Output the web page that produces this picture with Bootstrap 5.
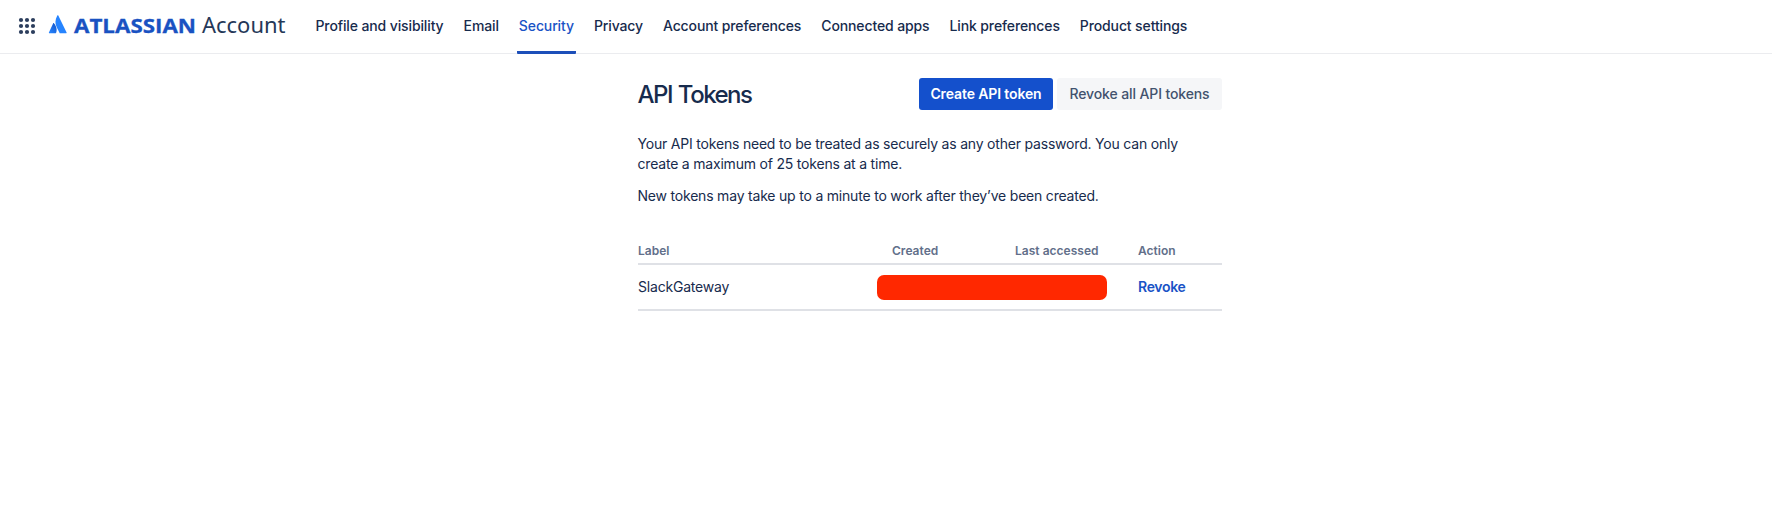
<!DOCTYPE html>
<html lang="en">
<head>
<meta charset="utf-8">
<meta name="viewport" content="width=device-width, initial-scale=1">
<title>API Tokens</title>
<link href="https://cdn.jsdelivr.net/npm/bootstrap@5.3.0/dist/css/bootstrap.min.css" rel="stylesheet">
<style>
  body { font-family: Inter, "Liberation Sans", sans-serif; font-size: 14px; line-height: 20px; letter-spacing: -.2px; color: #172b4d; background: #fff; }
  .topbar { height: 54px; border-bottom: 1px solid #ebecef; padding-left: 18px; letter-spacing: 0; }
  .topbar .nav-link { color: #172b4d; font-weight: 500; font-size: 14px; line-height: 20px; letter-spacing: -.12px; padding: 16px 2px 17px; height: 54px; }
  .topbar .nav-link.active { color: #1a53c6; background: linear-gradient(#1d4fb9, #1d4fb9) bottom / 100% 3px no-repeat; border-radius: 1px; }
  .main-nav { margin-left: 27.500px; gap: 16px; }
  .content { width: 584px; margin-left: 638px; padding-top: 24px; }
  .content h1 { font-size: 24px; line-height: 32px; font-weight: 500; letter-spacing: -1.500px; word-spacing: 1px; padding-top: 1px; margin-bottom: -1px; margin-left: -.5px; }
  .content .btn { font-size: 14px; line-height: 20px; font-weight: 500; letter-spacing: -.12px; padding: 6px 0; border: 0; border-radius: 3px; }
  .btn-create { width: 134px; background: #1450cc; color: #fff; }
  .content .btn-create { font-weight: 600; }
  .content .btn-revoke { width: 165px; background: #f5f6f8; color: #42526e; }
  .intro { padding-top: 24px; margin-left: -.5px; letter-spacing: -.2px; }
  .intro p { margin-bottom: 12px; }
  .token-table { margin-top: 34px; table-layout: fixed; border-collapse: separate; border-spacing: 0; --bs-table-bg: transparent; }
  .token-table > thead > tr > th, .token-table > tbody > tr > td { padding: 0; border: 0; border-bottom: 2px solid #dfe1e6; vertical-align: middle; }
  .token-table > thead > tr > th { height: 25px; padding: 1px 0 2px; font-size: 12px; line-height: 20px; letter-spacing: .02px; font-weight: 600; color: #626f8a; }
  .token-table > tbody > tr > td { height: 46px; color: #172b4d; }
  .redacted { height: 25px; width: 230px; margin-left: -15px; border-radius: 7px; background: #ff2800; }
  .revoke-link { color: #1a53c6; font-weight: 600; letter-spacing: -.3px; text-decoration: none; }
</style>
</head>
<body>
<header class="topbar d-flex align-items-start">
  <svg width="268" height="53" viewBox="18 0 268 53" class="flex-shrink-0" role="img" aria-label="Atlassian Account">
    <g fill="#2c3e5d">
      <circle cx="21" cy="20" r="2.100"/><circle cx="27" cy="20" r="2.100"/><circle cx="33" cy="20" r="2.100"/>
      <circle cx="21" cy="26" r="2.100"/><circle cx="27" cy="26" r="2.100"/><circle cx="33" cy="26" r="2.100"/>
      <circle cx="21" cy="32" r="2.100"/><circle cx="27" cy="32" r="2.100"/><circle cx="33" cy="32" r="2.100"/>
    </g>
    <defs>
      <linearGradient id="wing" x1="1" y1="0" x2=".2" y2="1"><stop offset="0" stop-color="#1050c4"/><stop offset="1" stop-color="#2684ff"/></linearGradient>
    </defs>
    <path fill="url(#wing)" d="M54.1 23.4c-.3-.4-.8-.4-1 .1l-4.200 9c-.2.4.1.8.5.8h6.100c.2 0 .4-.1.5-.3 1.400-2.800.5-7.100-1.900-9.600z"/>
    <path fill="#2684ff" d="M57.300 15.500c-2.400 4.200-2.300 8.400-.6 11.700l2.900 5.800c.1.2.3.3.5.3h6c.4 0 .7-.4.500-.8l-8.300-17c-.2-.4-.8-.4-1 0z"/>
    <text x="74" y="33" font-family="Open Sans, Noto Sans, sans-serif" font-weight="700" font-size="20" textLength="122" lengthAdjust="spacingAndGlyphs" fill="#1952c2" stroke="#1952c2" stroke-width=".3">ATLASSIAN</text>
    <text x="202" y="33" font-family="Noto Sans, sans-serif" font-weight="400" font-size="21.500" textLength="83.500" lengthAdjust="spacingAndGlyphs" fill="#253858">Account</text>
  </svg>
  <nav class="nav main-nav flex-nowrap text-nowrap">
    <a class="nav-link" href="#">Profile and visibility</a>
    <a class="nav-link" href="#">Email</a>
    <a class="nav-link active" href="#">Security</a>
    <a class="nav-link" href="#">Privacy</a>
    <a class="nav-link" href="#">Account preferences</a>
    <a class="nav-link" href="#">Connected apps</a>
    <a class="nav-link" href="#">Link preferences</a>
    <a class="nav-link" href="#">Product settings</a>
  </nav>
</header>
<main class="content">
  <div class="d-flex justify-content-between align-items-start">
    <h1>API Tokens</h1>
    <div class="d-flex gap-1 text-nowrap">
      <button class="btn btn-create" type="button">Create API token</button>
      <button class="btn btn-revoke" type="button">Revoke all API tokens</button>
    </div>
  </div>
  <div class="intro">
    <p>Your API tokens need to be treated as securely as any other password. You can only<br>create a maximum of 25 tokens at a time.</p>
    <p>New tokens may take up to a minute to work after they’ve been created.</p>
  </div>
  <table class="table token-table mb-0">
    <colgroup><col style="width:254px"><col style="width:123px"><col style="width:123px"><col style="width:84px"></colgroup>
    <thead><tr><th>Label</th><th>Created</th><th>Last accessed</th><th>Action</th></tr></thead>
    <tbody><tr><td>SlackGateway</td><td colspan="2"><div class="redacted"></div></td><td><a class="revoke-link" href="#">Revoke</a></td></tr></tbody>
  </table>
</main>
<script src="https://cdn.jsdelivr.net/npm/bootstrap@5.3.0/dist/js/bootstrap.bundle.min.js"></script>
</body>
</html>
